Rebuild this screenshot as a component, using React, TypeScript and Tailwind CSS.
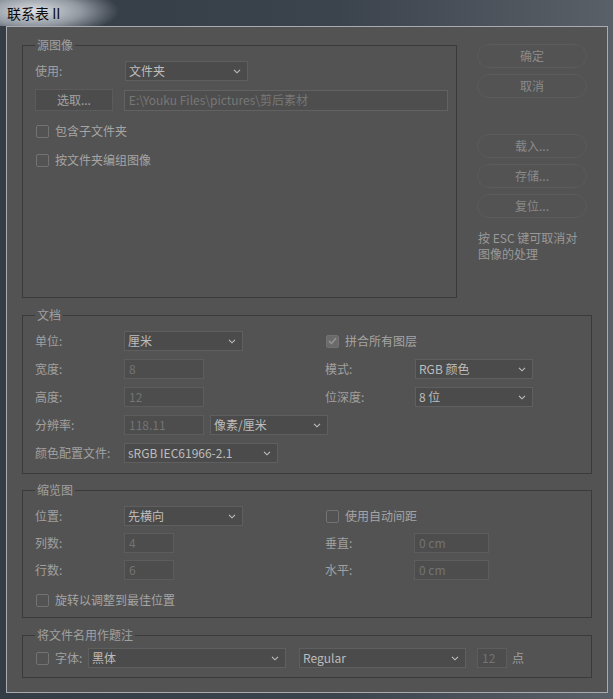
import type { ReactNode } from "react"

const font = "font-['Noto_Sans_CJK_SC','Noto_Sans',sans-serif]"

function Chevron() {
    return (
        <svg width="8" height="5" viewBox="0 0 8 5" className="shrink-0">
            <path d="M1 0.8 L4 3.8 L7 0.8" fill="none" stroke="#c0c0c0" strokeWidth="1.1" />
        </svg>
    )
}

function Select({ className, children }: { className: string; children: ReactNode }) {
    return (
        <div
            className={`${className} shrink-0 h-[20px] flex items-center justify-between pl-[3px] pr-[6px] bg-[#4b4b4b] border border-[#5f5f5f] text-[#bdbdbd] text-[12px] leading-none whitespace-nowrap`}
        >
            <span>{children}</span>
            <Chevron />
        </div>
    )
}

function Field({ className, children }: { className: string; children: ReactNode }) {
    return (
        <div
            className={`${className} shrink-0 h-[20px] flex items-center pl-[4px] bg-[#4d4d4d] border border-[#5d5d5d] text-[#737373] text-[12px] leading-none whitespace-nowrap`}
        >
            {children}
        </div>
    )
}

function Check({ checked, label }: { checked?: boolean; label: string }) {
    return (
        <div className="h-[20px] flex items-center">
            {checked ? (
                <div className="ml-[1px] w-[13px] h-[13px] rounded-[2px] bg-[#6a6a6a] border border-[#727272] flex items-center justify-center">
                    <svg width="9" height="8" viewBox="0 0 9 8">
                        <path d="M1 4 L3.5 6.5 L8 1.2" fill="none" stroke="#8f8f8f" strokeWidth="1.8" />
                    </svg>
                </div>
            ) : (
                <div className="ml-[1px] w-[13px] h-[13px] rounded-[2px] border border-[#737373]" />
            )}
            <span className="ml-[6px] text-[12px] text-[#a5a5a5]">{label}</span>
        </div>
    )
}

function Row({ label, wide, children }: { label: string; wide?: boolean; children: ReactNode }) {
    return (
        <div className="h-[20px] flex items-center">
            <span className={`${wide ? "w-[90px]" : "w-[89px]"} shrink-0 text-[12px] text-[#a0a0a0]`}>{label}</span>
            {children}
        </div>
    )
}

function Group({ title, className, children }: { title: string; className: string; children: ReactNode }) {
    return (
        <fieldset className={`${className} min-w-0 border border-[#3a3a3a] pl-[12px]`}>
            <legend className="px-[2px] text-[12px] leading-[16px] text-[#a0a0a0]">{title}</legend>
            {children}
        </fieldset>
    )
}

function Pill({ children }: { children: ReactNode }) {
    return (
        <div className="h-[24px] w-[110px] rounded-full border border-[#5b5b5b] flex items-center justify-center text-[12px] text-[#8a8a8a]">
            {children}
        </div>
    )
}

export default function App() {
    return (
        <div
            className={`${font} w-[613px] h-[699px] overflow-hidden bg-[linear-gradient(90deg,#343c46,#3b434d_55%,#5a6067)]`}
        >
            <div className="h-[26px] flex items-center pl-[7px] bg-[radial-gradient(ellipse_85px_26px_at_34px_11px,rgba(225,229,233,0.97),rgba(196,202,209,0.65)_55%,transparent)]">
                <span className="text-[14px] text-[#0c0c0c] leading-none">联系表 II</span>
            </div>

            <div className="ml-[6px] w-[602px] h-[667px] border border-[#a8acb1] bg-[#535353] pt-[10px] pl-[15px]">
                {/* top part: source + buttons */}
                <div className="flex gap-[20px]">
                    <Group title="源图像" className="w-[435px] h-[261px] pr-[8px]">
                        <div className="pt-[8px] flex flex-col">
                            <Row label="使用:" wide>
                                <Select className="w-[123px]">文件夹</Select>
                            </Row>
                            <div className="mt-[8px] flex items-center">
                                <div className="w-[78px] h-[22px] bg-[#4c4c4c] border border-[#5b5b5b] flex items-center justify-center text-[12px] text-[#a3a3a3]">
                                    选取...
                                </div>
                                <div className="ml-[11px] w-[325px] h-[21px] flex items-center pl-[4px] bg-[#4e4e4e] border border-[#626262] text-[12px] text-[#777777] whitespace-nowrap">
                                    E:\Youku Files\pictures\剪后素材
                                </div>
                            </div>
                            <div className="mt-[10px]">
                                <Check label="包含子文件夹" />
                            </div>
                            <div className="mt-[9px]">
                                <Check label="按文件夹编组图像" />
                            </div>
                        </div>
                    </Group>

                    <div className="pt-[7px] flex flex-col">
                        <div className="flex flex-col gap-[6px]">
                            <Pill>确定</Pill>
                            <Pill>取消</Pill>
                        </div>
                        <div className="mt-[36px] flex flex-col gap-[6px]">
                            <Pill>载入...</Pill>
                            <Pill>存储...</Pill>
                            <Pill>复位...</Pill>
                        </div>
                        <p className="mt-[12px] pl-[1px] text-[12px] leading-[16px] text-[#999999]">
                            按 ESC 键可取消对
                            <br />
                            图像的处理
                        </p>
                    </div>
                </div>

                {/* document */}
                <Group title="文档" className="mt-[9px] w-[570px] h-[167px]">
                    <div className="pt-[8px] flex">
                        <div className="w-[290px] shrink-0 flex flex-col gap-[8px]">
                            <Row label="单位:">
                                <Select className="w-[119px]">厘米</Select>
                            </Row>
                            <Row label="宽度:">
                                <Field className="w-[80px]">8</Field>
                            </Row>
                            <Row label="高度:">
                                <Field className="w-[80px]">12</Field>
                            </Row>
                            <Row label="分辨率:">
                                <Field className="w-[80px]">118.11</Field>
                                <Select className="ml-[6px] w-[118px]">像素/厘米</Select>
                            </Row>
                            <Row label="颜色配置文件:">
                                <Select className="w-[154px]">sRGB IEC61966-2.1</Select>
                            </Row>
                        </div>
                        <div className="flex flex-col gap-[8px]">
                            <Check checked label="拼合所有图层" />
                            <Row label="模式:" wide>
                                <Select className="w-[118px]">RGB 颜色</Select>
                            </Row>
                            <Row label="位深度:" wide>
                                <Select className="w-[118px]">8 位</Select>
                            </Row>
                        </div>
                    </div>
                </Group>

                {/* thumbnails */}
                <Group title="缩览图" className="mt-[8px] w-[570px] h-[136px]">
                    <div className="pt-[8px] flex">
                        <div className="w-[290px] shrink-0 flex flex-col gap-[7px]">
                            <Row label="位置:">
                                <Select className="w-[119px]">先横向</Select>
                            </Row>
                            <Row label="列数:">
                                <Field className="w-[50px]">4</Field>
                            </Row>
                            <Row label="行数:">
                                <Field className="w-[50px]">6</Field>
                            </Row>
                            <div className="mt-[3px]">
                                <Check label="旋转以调整到最佳位置" />
                            </div>
                        </div>
                        <div className="flex flex-col gap-[7px]">
                            <Check label="使用自动间距" />
                            <Row label="垂直:">
                                <Field className="w-[75px]">0 cm</Field>
                            </Row>
                            <Row label="水平:">
                                <Field className="w-[75px]">0 cm</Field>
                            </Row>
                        </div>
                    </div>
                </Group>

                {/* caption */}
                <Group title="将文件名用作题注" className="mt-[9px] w-[570px] h-[51px]">
                    <div className="pt-[5px] h-[25px] flex items-center">
                        <div className="ml-[1px] w-[13px] h-[13px] rounded-[2px] border border-[#737373]" />
                        <span className="ml-[6px] w-[33px] text-[12px] text-[#a0a0a0]">字体:</span>
                        <Select className="w-[198px]">黑体</Select>
                        <Select className="ml-[13px] w-[167px]">Regular</Select>
                        <Field className="ml-[11px] w-[30px]">12</Field>
                        <span className="ml-[5px] text-[12px] text-[#a0a0a0]">点</span>
                    </div>
                </Group>
            </div>
        </div>
    )
}
